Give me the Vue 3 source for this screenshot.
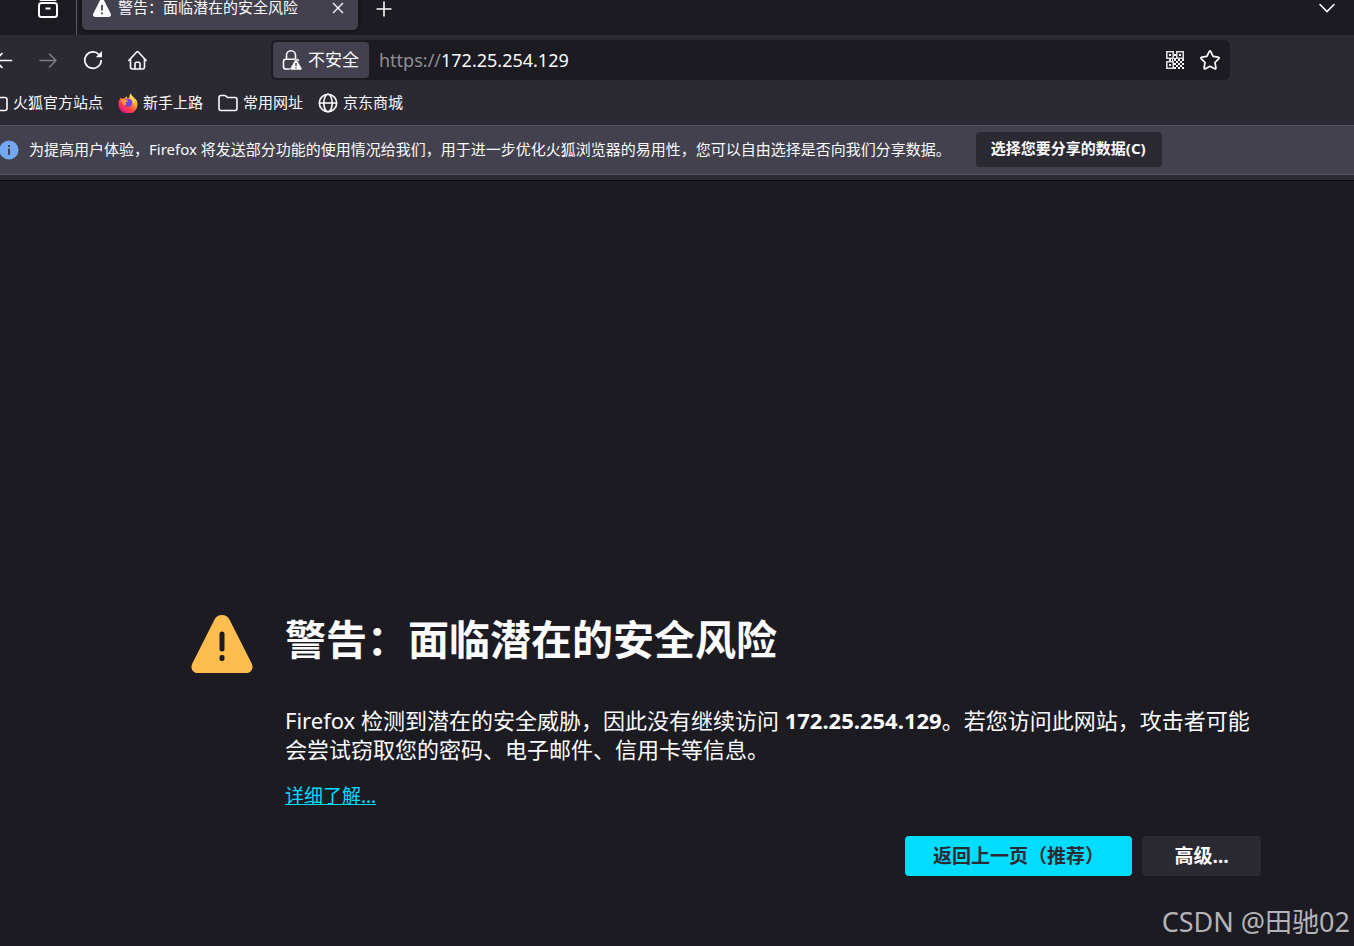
<script setup>
const host = '172.25.254.129'
</script>

<template>
  <div class="window">
    <header class="chrome">
      <div class="tabstrip">
        <button class="icon-btn archive" aria-label="标签页列表">
          <svg width="22" height="22" viewBox="0 0 22 22" fill="none" stroke="#fbfbfe" stroke-width="2">
            <path d="M3.500 2h15" stroke-linecap="round" />
            <rect x="2" y="5" width="18" height="14" rx="2.500" />
            <path d="M8.500 10.500h5" />
          </svg>
        </button>
        <div class="tab">
          <svg width="20" height="20" viewBox="0 0 20 20">
            <path d="M10 1c.9 0 1.600.5 2 1.300l6.800 13.400c.8 1.600-.2 3.300-2 3.300H3.200c-1.800 0-2.800-1.700-2-3.300L8 2.300C8.400 1.500 9.100 1 10 1z" fill="#fbfbfe" />
            <path d="M10 7v5.500M10 14.500v1.800" stroke="#42414d" stroke-width="1.800" />
          </svg>
          <span class="tab-title">警告：面临潜在的安全风险</span>
          <button class="icon-btn" aria-label="关闭标签页">
            <svg width="12" height="12" viewBox="0 0 12 12" stroke="#fbfbfe" stroke-width="1.300"><path d="M1 1l10 10M11 1L1 11" /></svg>
          </button>
        </div>
        <button class="icon-btn plus" aria-label="新建标签页">
          <svg width="16" height="16" viewBox="0 0 16 16" stroke="#fbfbfe" stroke-width="1.600"><path d="M8 .5v15M.5 8h15" /></svg>
        </button>
        <button class="icon-btn list-all" aria-label="列出所有标签页">
          <svg width="16" height="10" viewBox="0 0 16 10" fill="none" stroke="#fbfbfe" stroke-width="1.600" stroke-linecap="round"><path d="M1 1.500l7 7 7-7" /></svg>
        </button>
      </div>

      <nav class="toolbar">
        <div class="nav-buttons">
          <button class="icon-btn" aria-label="后退">
            <svg width="20" height="20" viewBox="0 0 20 20" fill="none" stroke="#fbfbfe" stroke-width="1.700" stroke-linecap="round" stroke-linejoin="round"><path d="M18.500 10.500H2M9 3.500l-7 7 7 7" /></svg>
          </button>
          <button class="icon-btn" aria-label="前进" disabled>
            <svg width="20" height="20" viewBox="0 0 20 20" fill="none" stroke="#7b7a82" stroke-width="1.600" stroke-linecap="round" stroke-linejoin="round"><path d="M2 10.500h16M11.500 4l6.500 6.500-6.500 6.500" /></svg>
          </button>
          <button class="icon-btn" aria-label="重新载入">
            <svg width="20" height="20" viewBox="0 0 20 20" fill="none" stroke="#fbfbfe" stroke-width="1.700" stroke-linecap="round">
              <path d="M16 4.500A8.200 8.200 0 1 0 18.200 10.500" />
              <path d="M19 1v6.200h-6.200z" fill="#fbfbfe" stroke="none" />
            </svg>
          </button>
          <button class="icon-btn" aria-label="主页">
            <svg width="20" height="20" viewBox="0 0 20 20" fill="none" stroke="#fbfbfe" stroke-width="1.600" stroke-linecap="round" stroke-linejoin="round">
              <path d="M.8 10.500L8.700 2q.8-.8 1.600 0L18.200 10.500" />
              <path d="M2.500 9v8q0 2 2 2h10q2 0 2-2V9" />
              <path d="M7 18.800v-5q0-1.500 1.500-1.500h2q1.500 0 1.500 1.500v5" />
            </svg>
          </button>
        </div>
        <div class="urlbar">
          <button class="identity">
            <svg width="22" height="22" viewBox="0 0 22 22" fill="none">
              <path d="M5.500 10V6.300a4.500 4.500 0 0 1 9 0V10M8.500 20H4.800q-2.300 0-2.300-2.300v-5.200q0-2.300 2.300-2.300h10.400q1.800 0 2.200 1" stroke="#fbfbfe" stroke-width="1.600" stroke-linecap="round" />
              <path d="M15 10.500q.8 0 1.200.8l4.600 8q.8 1.700-.9 1.700h-9.800q-1.700 0-.9-1.700l4.600-8q.4-.8 1.200-.8z" fill="#fbfbfe" stroke="#42414d" stroke-width=".5" />
              <path d="M15 14v3M15 18.200v1.300" stroke="#42414d" stroke-width="1.400" />
            </svg>
            <span>不安全</span>
          </button>
          <div class="address"><span class="scheme">https://</span>{{ host }}</div>
          <button class="icon-btn" aria-label="二维码">
            <svg width="18" height="18" viewBox="0 0 18 18" fill="none" stroke="#dcdce0" stroke-width="1.600">
              <path d="M.8 .8h6.400v6.400H.8zM10.800 .8h6.400v6.400h-6.400zM.8 10.800h6.400v6.400H.8z" />
              <path d="M3 3h2v2H3zM13 3h2v2h-2zM3 13h2v2H3zM8 3h2v2H8zM3 8h2v2H3zM8 7h2v3H8zM12 8h2v2h-2zM16 8h2v2h-2zM6 8h1v2H6zM10 10h2v2h-2zM14 10h2v2h-2zM8 12h2v2H8zM12 12h2v2h-2zM16 12h2v2h-2zM10 14h2v2h-2zM14 14h2v2h-2zM12 16h2v2h-2zM16 16h2v2h-2zM8 16h2v2H8z" fill="#fbfbfe" stroke="none" />
            </svg>
          </button>
          <button class="icon-btn" aria-label="添加书签">
            <svg width="20" height="20" viewBox="0 0 20 20" fill="none" stroke="#fbfbfe" stroke-width="1.700" stroke-linejoin="round">
              <path d="M9.200 1.600q.8-1.300 1.600 0l2.300 4.800 5.200.8q1.500.4.500 1.500l-3.800 3.800.9 5.300q.1 1.500-1.200 1L10 16.300l-4.700 2.500q-1.300.5-1.200-1l.9-5.300L1.200 8.700q-1-1.100.5-1.500l5.200-.8z" />
            </svg>
          </button>
        </div>
      </nav>

      <div class="bookmarks">
        <a href="#" class="bookmark">
          <svg width="20" height="18" viewBox="0 0 20 18" fill="none" stroke="#fbfbfe" stroke-width="1.600"><path d="M1 3.500q0-2 2-2h3.500q1 0 1.700.7l1.300 1.300H17q2 0 2 2v9q0 2-2 2H3q-2 0-2-2z" /></svg>
          <span>火狐官方站点</span>
        </a>
        <a href="#" class="bookmark">
          <svg width="20" height="20" viewBox="0 0 20 20">
            <defs>
              <linearGradient id="flame" x1="16" y1="2" x2="4" y2="18" gradientUnits="userSpaceOnUse">
                <stop offset="0" stop-color="#fff44f" />
                <stop offset=".35" stop-color="#ffa436" />
                <stop offset=".65" stop-color="#ff4a3d" />
                <stop offset="1" stop-color="#e31587" />
              </linearGradient>
            </defs>
            <path d="M2.800 4.200q.3 1 .9 1.500 1.300-.5 2.700-.2 1.100-1.700 2.800-2.300-.5 1.200.1 2.100l2.100-.6q-.3-2.900 1.500-4.500.3 2.500 2.400 3.900 1.300 1 1.700 2.200v-1.100q2.900 3 2.500 6.400a9.500 9 0 0 1-19 .2Q.5 7 2.800 4.200z" fill="url(#flame)" />
            <circle cx="10.200" cy="9.800" r="4" fill="#7542e5" />
            <path d="M2.800 6.500q2-1.500 4.800.6l2.800.4q-.2 1.300-2.300 1.600-1 1.400.3 2.500-1.500 1.400-3.600-.6z" fill="#ff9640" />
            <path d="M12.500 5.500q3.500 2.500 2.500 6.300 2-3.300.2-6.400-2.300-1.300-2.500-4-.8 2-.2 4.100z" fill="#ffe24a" />
          </svg>
          <span>新手上路</span>
        </a>
        <a href="#" class="bookmark">
          <svg width="20" height="18" viewBox="0 0 20 18" fill="none" stroke="#fbfbfe" stroke-width="1.600"><path d="M1 3.500q0-2 2-2h3.500q1 0 1.700.7l1.300 1.300H17q2 0 2 2v9q0 2-2 2H3q-2 0-2-2z" /></svg>
          <span>常用网址</span>
        </a>
        <a href="#" class="bookmark">
          <svg width="20" height="20" viewBox="0 0 20 20" fill="none" stroke="#fbfbfe" stroke-width="1.600"><circle cx="10" cy="10" r="8.700" /><ellipse cx="10" cy="10" rx="4.200" ry="8.700" /><path d="M1.500 10h17" /></svg>
          <span>京东商城</span>
        </a>
      </div>

      <div class="notice">
        <svg width="20" height="20" viewBox="0 0 20 20"><circle cx="10" cy="10" r="9.500" fill="#73a7f3" /><path d="M10 8.500v6.300M10 5v2" stroke="#42414d" stroke-width="2" /></svg>
        <p>为提高用户体验，Firefox 将发送部分功能的使用情况给我们，用于进一步优化火狐浏览器的易用性，您可以自由选择是否向我们分享数据。</p>
        <button class="share">选择您要分享的数据(C)</button>
      </div>
    </header>

    <main class="page">
      <svg class="warning" width="64" height="60" viewBox="0 0 64 60">
        <path d="M32 1c3.500 0 6.200 1.800 7.700 4.900l22 43.500C64 54 61.500 59 56 59H8C2.500 59 0 54 2.300 49.400l22-43.500C25.800 2.800 28.500 1 32 1z" fill="#ffbd4f" />
        <path d="M32 20v15" stroke="#1c1b22" stroke-width="5" stroke-linecap="round" />
        <rect x="29.500" y="41" width="5" height="6" rx="2" fill="#1c1b22" />
      </svg>
      <section class="body">
        <h1>警告：面临潜在的安全风险</h1>
        <p class="desc">Firefox 检测到潜在的安全威胁，因此没有继续访问 <strong>{{ host }}</strong>。若您访问此网站，攻击者可能会尝试窃取您的密码、电子邮件、信用卡等信息。</p>
        <a href="#" class="learn">详细了解…</a>
        <div class="actions">
          <button class="action primary">返回上一页（推荐）</button>
          <button class="action">高级…</button>
        </div>
      </section>
    </main>
    <div class="watermark">CSDN @田驰02</div>
  </div>
</template>

<style>
body {
  margin: 0;
  background: #1c1b22;
}
</style>

<style scoped>
.window {
  position: relative;
  display: flex;
  flex-direction: column;
  min-height: 100vh;
  overflow: hidden;
  box-sizing: border-box;
  background: #1c1b22;
  color: #fbfbfe;
  font: 15px/20px "Noto Sans", "Noto Sans CJK SC", sans-serif;
}
svg {
  display: block;
  flex: none;
}
button {
  font: inherit;
  color: inherit;
  border: 0;
  padding: 0;
  background: none;
}
.icon-btn {
  display: flex;
  align-items: center;
  justify-content: center;
}
.chrome {
  background: #2b2a33;
  border-bottom: 1px solid #0c0c0d;
  padding-bottom: 5px;
}
.tabstrip {
  display: flex;
  height: 35px;
  background: #1c1b22;
}
.archive {
  align-items: flex-start;
  width: 77px;
  height: 37px;
  margin-top: -2px;
  padding-left: 20px;
  border-right: 1px solid #5b5a63;
}
.tab {
  display: flex;
  align-items: center;
  width: 276px;
  height: 44px;
  margin: -14px 0 0 5px;
  padding: 0 14px 0 10px;
  box-sizing: border-box;
  border-radius: 5px;
  background: #42414d;
  box-shadow: 0 0 4px #0c0c0d;
}
.tab-title {
  flex: 1;
  margin-left: 6px;
  padding-bottom: 2px;
}
.plus {
  height: 18px;
  margin-left: 18px;
}
.list-all {
  height: 16px;
  margin-left: auto;
  margin-right: 19px;
}
.toolbar {
  display: flex;
  align-items: center;
  height: 50px;
}
.nav-buttons {
  display: flex;
  gap: 25px;
  margin-left: -7px;
}
.urlbar {
  display: flex;
  align-items: center;
  flex: 1;
  gap: 16px;
  height: 40px;
  margin: 0 124px 0 123px;
  padding: 0 10px 0 2px;
  box-sizing: border-box;
  border-radius: 5px;
  background: #1c1b22;
}
.identity {
  display: flex;
  align-items: center;
  gap: 5px;
  height: 36px;
  padding: 0 10px 0 8px;
  border-radius: 4px;
  background: #42414d;
  font-size: 17px;
}
.address {
  flex: 1;
  margin-left: -6px;
  font-size: 18px;
}
.scheme {
  color: #8f8f96;
}
.bookmarks {
  display: flex;
  align-items: center;
  gap: 15px;
  height: 36px;
  padding-bottom: 4px;
  margin-left: -12px;
}
.bookmark {
  display: flex;
  align-items: center;
  gap: 5px;
  color: inherit;
  text-decoration: none;
}
.bookmark span {
  padding-bottom: 2px;
}
.notice {
  display: flex;
  align-items: center;
  height: 48px;
  border: solid #53525e;
  border-width: 1px 0;
  background: #42414d;
}
.notice svg {
  margin-left: -1px;
}
.notice p {
  margin: 0 25px 0 10px;
  padding-bottom: 2px;
}
.share {
  height: 35px;
  padding: 0 16px 2px 15px;
  margin-bottom: 2px;
  border-radius: 4px;
  background: #2b2a33;
  font-weight: 700;
}
.page {
  display: flex;
  flex: 1;
  align-items: flex-end;
  gap: 31px;
  margin: 0 93px 0 190px;
  padding-bottom: 70px;
}
.warning {
  margin-bottom: 202px;
}
.body {
  flex: 1;
}
h1 {
  margin: 0 0 42px;
  font-size: 41px;
  line-height: 50px;
  font-weight: 700;
}
.desc {
  margin: 0 0 18px;
  font-size: 22px;
  line-height: 29px;
}
.learn {
  display: block;
  width: fit-content;
  color: #00ddff;
  font-size: 19px;
  line-height: 28px;
}
.actions {
  display: flex;
  justify-content: flex-end;
  gap: 10px;
  margin-top: 26px;
}
.action {
  height: 40px;
  min-width: 119px;
  padding: 0 28px;
  border-radius: 4px;
  background: #2b2a33;
  font-size: 19px;
  font-weight: 700;
}
.primary {
  background: #00ddff;
  color: #2b2a33;
}
.watermark {
  position: absolute;
  right: 4px;
  bottom: 6px;
  font-size: 27px;
  line-height: 36px;
  color: #b4b4b8;
}
</style>
